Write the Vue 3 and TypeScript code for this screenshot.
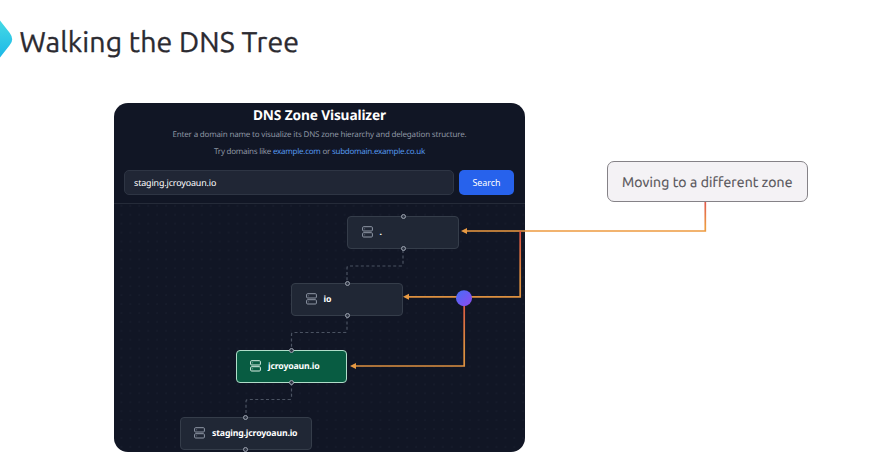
<script setup lang="ts">
interface ZoneNode {
  label: string
  x: number
  y: number
  w: number
  handle: number
  active?: boolean
}

const nodes: ZoneNode[] = [
  { label: '.', x: 233, y: 12, w: 111.5, handle: 56 },
  { label: 'io', x: 177, y: 79, w: 112, handle: 56 },
  { label: 'jcroyoaun.io', x: 121.5, y: 146, w: 111.5, handle: 56, active: true },
  { label: 'staging.jcroyoaun.io', x: 65.5, y: 212.5, w: 132, handle: 66 },
]
</script>

<template>
  <main class="slide">
    <svg class="accent" width="14" height="44" viewBox="0 0 14 44">
      <defs>
        <linearGradient id="accentFill" x1="0" y1="0" x2="0" y2="1">
          <stop offset="0" stop-color="#45d9e4" />
          <stop offset="1" stop-color="#1cb8e8" />
        </linearGradient>
      </defs>
      <path d="M0 3.5L9.8 16Q14.6 22.5 9.8 28L0 40.5Z" fill="url(#accentFill)" />
    </svg>
    <h1 class="heading">Walking the DNS Tree</h1>

    <section class="panel">
      <header class="intro">
        <h2>DNS Zone Visualizer</h2>
        <p class="lead">Enter a domain name to visualize its DNS zone hierarchy and delegation structure.</p>
        <p class="hint">Try domains like <a>example.com</a> or <a>subdomain.example.co.uk</a></p>
        <div class="search">
          <div class="field"><span>staging.jcroyoaun.io</span></div>
          <button type="button"><span>Search</span></button>
        </div>
      </header>
      <div class="canvas">
        <svg class="edges" width="411" height="248" viewBox="0 0 411 248">
          <defs>
            <pattern id="dots" x="3.4" y="6.7" width="8.93" height="8.93" patternUnits="userSpaceOnUse">
              <circle cx="4" cy="4" r=".5" fill="#262d3c" />
            </pattern>
          </defs>
          <rect width="411" height="248" fill="url(#dots)" />
          <g fill="none" stroke="#4b5362" stroke-width="1.2" stroke-dasharray="3 2.4">
            <path d="M289 46V60Q289 62 287 62H235Q233 62 233 64V78" />
            <path d="M233 112V126.500Q233 128.500 231 128.500H179.500Q177.500 128.500 177.500 130.500V145" />
            <path d="M177.500 179V193.500Q177.500 195.500 175.500 195.500H134Q132 195.500 132 197.500V212" />
          </g>
        </svg>
        <div
          v-for="node in nodes"
          :key="node.label"
          class="node"
          :class="{ active: node.active }"
          :style="{ left: node.x + 'px', top: node.y + 'px', width: node.w + 'px' }"
        >
          <i class="handle top" :style="{ left: node.handle + 'px' }"></i>
          <svg class="server" width="11" height="12" viewBox="0 0 11 12" fill="none" stroke="currentColor">
            <rect x=".6" y=".7" width="9.8" height="4.300" rx="1" />
            <rect x=".6" y="6.700" width="9.800" height="4.300" rx="1" />
            <path d="M2.300 2.850H3.100M2.300 8.850H3.100" stroke-width=".8" />
          </svg>
          <span>{{ node.label }}</span>
          <i class="handle bottom" :style="{ left: node.handle + 'px' }"></i>
        </div>
      </div>
    </section>

    <aside class="callout"><span>Moving to a different zone</span></aside>

    <svg class="arrows" width="892" height="472" viewBox="0 0 892 472">
      <defs>
        <linearGradient id="g1" gradientUnits="userSpaceOnUse" x1="0" y1="201" x2="0" y2="231">
          <stop offset="0" stop-color="#e0584f" /><stop offset=".85" stop-color="#ed9a40" />
        </linearGradient>
        <linearGradient id="g2" gradientUnits="userSpaceOnUse" x1="0" y1="231" x2="0" y2="297">
          <stop offset="0" stop-color="#dd4f42" /><stop offset=".7" stop-color="#dd9040" />
        </linearGradient>
        <linearGradient id="g3" gradientUnits="userSpaceOnUse" x1="0" y1="306" x2="0" y2="366">
          <stop offset="0" stop-color="#dd5c42" /><stop offset=".7" stop-color="#dd9040" />
        </linearGradient>
        <linearGradient id="ball" x1="0" y1="0" x2="1" y2="1">
          <stop offset="0" stop-color="#456df8" /><stop offset="1" stop-color="#8f4af0" />
        </linearGradient>
      </defs>
      <g fill="none" stroke-width="1.700">
        <path d="M705.300 202V231H465" stroke="url(#g1)" />
        <path d="M520.200 231V296.800H407" stroke="url(#g2)" />
        <path d="M464.200 306V366H354" stroke="url(#g3)" />
      </g>
      <g fill="#e89a43">
        <path d="M461 231L467 228V234Z" />
        <path d="M403 296.800L409 293.800V299.800Z" />
        <path d="M350 366L356 363V369Z" />
      </g>
      <circle cx="464" cy="298.200" r="8" fill="url(#ball)" />
    </svg>
  </main>
</template>

<style>
body {
  margin: 0;
  background: #fff;
}
</style>

<style scoped>
.slide {
  position: relative;
  box-sizing: border-box;
  display: grid;
  grid-template-columns: 411px 200px;
  grid-template-rows: 102px 350px;
  column-gap: 82px;
  padding-left: 114px;
  width: 892px;
  height: 472px;
  overflow: hidden;
  background: #fff;
  font-family: 'Noto Sans', sans-serif;
  text-rendering: geometricPrecision;
}
.accent {
  position: absolute;
  left: 0;
  top: 17px;
}
.heading {
  grid-column: 1 / -1;
  margin: 23px 0 0 -94.500px;
  font-family: Ubuntu, 'Noto Sans', sans-serif;
  font-size: 28.500px;
  font-weight: 400;
  line-height: 38px;
  letter-spacing: 0.120px;
  -webkit-text-stroke: 0.350px #2b2a30;
  color: #2b2a30;
  white-space: nowrap;
}
.panel {
  display: flex;
  flex-direction: column;
  box-sizing: border-box;
  overflow: hidden;
  height: 349.500px;
  margin-top: .5px;
  border-radius: 14px;
  background: #111625;
  color: #fff;
  white-space: nowrap;
}
.intro {
  display: flex;
  flex-direction: column;
  box-sizing: border-box;
  height: 101.500px;
  padding: 4.400px 10px 8.500px;
  border-bottom: 1px solid #252b39;
  text-align: center;
}
h2 {
  margin: 0;
  font-size: 13.700px;
  line-height: 17px;
  font-weight: 700;
  letter-spacing: -0.130px;
}
p {
  margin: 0;
  font-size: 8px;
  line-height: 17px;
  color: #8d95a3;
}
.lead {
  margin-top: 2.100px;
  letter-spacing: -0.180px;
}
.hint {
  line-height: 17.500px;
  letter-spacing: -0.250px;
}
a {
  color: #5496ed;
}
.search {
  display: flex;
  gap: 5px;
  margin-top: auto;
}
.field {
  display: flex;
  align-items: center;
  box-sizing: border-box;
  width: 330px;
  height: 25px;
  padding-left: 9px;
  border: 1px solid #2e3544;
  border-radius: 5px;
  background: #202635;
  font-size: 8.900px;
  letter-spacing: -0.120px;
}
button {
  width: 55px;
  height: 25px;
  padding: 0;
  border: 0;
  border-radius: 5px;
  background: #2762ec;
  color: #fff;
  font: 8.900px 'Noto Sans', sans-serif;
}
.canvas {
  position: relative;
  flex: 1;
}
.edges {
  position: absolute;
  left: 0;
  top: 0;
}
.node {
  position: absolute;
  display: flex;
  align-items: center;
  gap: 7px;
  box-sizing: border-box;
  height: 33px;
  padding: 0 0 1px 13.500px;
  border: 1px solid #353d4a;
  border-radius: 4px;
  background: #202735;
  color: #fff;
  font-size: 8.700px;
  letter-spacing: -0.150px;
  font-weight: 700;
}
.node.active {
  border: 1.500px solid #b0ddc9;
  background: #085c42;
}
.server {
  flex: none;
  color: #8f98a6;
}
.active .server {
  color: #d8eee3;
}
.handle {
  position: absolute;
  box-sizing: border-box;
  width: 5px;
  height: 5px;
  margin-left: -3.500px;
  border: 1px solid #9ca3af;
  border-radius: 50%;
  background: #303746;
}
.top {
  top: -3px;
}
.bottom {
  bottom: -3px;
}
.callout {
  display: flex;
  align-items: center;
  justify-content: center;
  box-sizing: border-box;
  width: 200.500px;
  height: 41px;
  margin-top: 59px;
  border: 1px solid #858287;
  border-radius: 7px;
  background: #f4f2f5;
  color: #555358;
  font-family: Ubuntu, 'Noto Sans', sans-serif;
  font-size: 14px;
  letter-spacing: 0.140px;
  -webkit-text-stroke: 0.200px #555358;
  white-space: nowrap;
}
.arrows {
  position: absolute;
  inset: 0;
  pointer-events: none;
}
</style>
